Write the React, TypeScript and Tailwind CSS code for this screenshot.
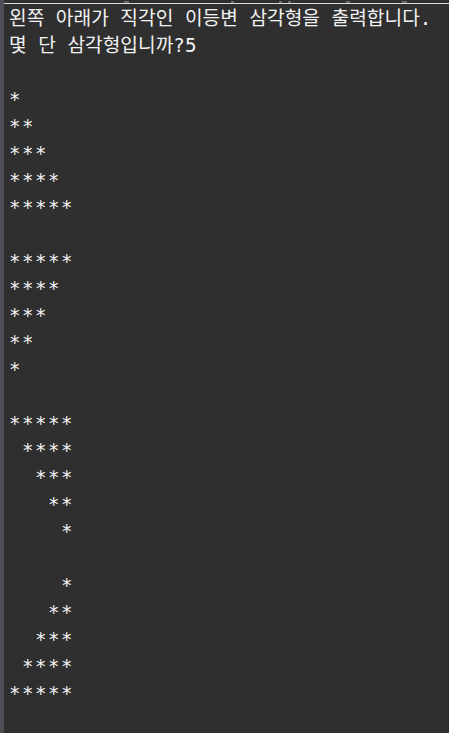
const intro = ["왼쪽 아래가 직각인 이등변 삼각형을 출력합니다.", "몇 단 삼각형입니까?5"]

const rows = [
  "",
  "*",
  "**",
  "***",
  "****",
  "*****",
  "",
  "*****",
  "****",
  "***",
  "**",
  "*",
  "",
  "*****",
  " ****",
  "  ***",
  "   **",
  "    *",
  "",
  "    *",
  "   **",
  "  ***",
  " ****",
  "*****",
]

export default function App() {
  return (
    <div className="flex h-[733px] w-[449px] overflow-hidden bg-[#2f2f2f]">
      {/* left gutter */}
      <div className="w-[4px] shrink-0 bg-[#4c5055]" />
      <div className="flex flex-1 flex-col">
        {/* cut-off previous line */}
        <div className="flex h-[3px] items-end">
          <span className="ml-[120px] h-[2px] w-[5px] bg-[#6a6a6a]" />
          <span className="ml-[102px] h-[2px] w-[3px] bg-[#6a6a6a]" />
          <span className="ml-[45px] h-[2px] w-[3px] bg-[#6a6a6a]" />
          <span className="ml-[6px] h-[2px] w-[3px] bg-[#6a6a6a]" />
          <span className="ml-[55px] h-[2px] w-[4px] bg-[#6a6a6a]" />
          <span className="ml-[52px] h-[2px] w-[5px] bg-[#6a6a6a]" />
        </div>
        <div className="h-px bg-[#dcdcdc]" />
        <div className="pl-[5px] pt-[1px] text-[#f2f2f2]">
          {intro.map((line, i) => (
            <div
              key={i}
              className="h-[27px] whitespace-pre font-['DejaVu_Sans_Mono','Noto_Sans_CJK_KR',monospace] text-[19.2px] leading-[27px]"
            >
              {line}
            </div>
          ))}
          {rows.map((line, i) => (
            <div
              key={"r" + i}
              className="h-[27px] whitespace-pre font-['DejaVu_Sans_Mono',monospace] text-[19px] leading-[26px] tracking-[1.56px]"
            >
              {line}
            </div>
          ))}
        </div>
      </div>
    </div>
  )
}
